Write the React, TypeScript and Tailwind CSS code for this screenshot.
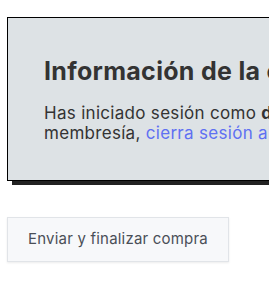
import React from "react";

const App: React.FC = () => {
  return (
    <div className="w-[269px] h-[282px] overflow-hidden bg-white font-['Inter',sans-serif]">
      <div className="pt-[17px] pl-[7px]">
        {/* Account info panel */}
        <div className="w-[420px] bg-[#dde2e5] border border-black shadow-[5px_4px_0_#222] pl-[36px] pt-[37px] pb-[37px]">
          <h2 className="text-[25px] leading-[32px] font-bold tracking-[0.3px] text-[#333] whitespace-nowrap mb-[16px]">
            Información de la cuenta
          </h2>
          <p className="text-[17px] leading-[20px] tracking-[0.3px] text-[#333] whitespace-nowrap">
            Has iniciado sesión como <strong className="font-bold">demo</strong>.
            <br />
            membresía, <a className="text-[#5f70f2]">cierra sesión ahora</a>
          </p>
        </div>

        {/* Submit */}
        <button className="mt-[36px] w-[222px] h-[45px] bg-[#f7f8fa] border border-[#e1e4e8] shadow-[0_1px_2px_rgba(0,0,0,0.08)] text-[15px] tracking-[0.2px] text-[#4a4f57]">
          Enviar y finalizar compra
        </button>
      </div>
    </div>
  );
};

export default App;
